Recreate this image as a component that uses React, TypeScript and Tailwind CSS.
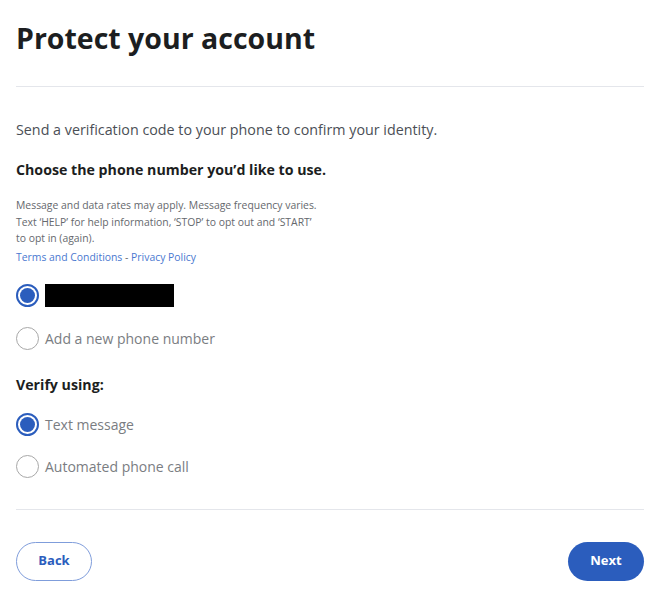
import React, { useState } from 'react';

const font = { fontFamily: '"Open Sans", Lato, sans-serif' };

function Radio({ checked, label, onClick, children }: { checked: boolean; label?: string; onClick: () => void; children?: React.ReactNode }) {
  return (
    <button type="button" onClick={onClick} className="flex items-center gap-[6px] text-left">
      {checked ? (
        <span className="flex h-[23px] w-[23px] shrink-0 items-center justify-center rounded-full border-[2px] border-[#2b5dbd] bg-white">
          <span className="h-[15px] w-[15px] rounded-full bg-[#2b5dbd]" />
        </span>
      ) : (
        <span className="h-[23px] w-[23px] shrink-0 rounded-full border-[1.5px] border-[#a8a8a8] bg-white" />
      )}
      {children ?? <span className="text-[14px] text-[#7a7d82]">{label}</span>}
    </button>
  );
}

export default function App() {
  const [phone, setPhone] = useState(0);
  const [method, setMethod] = useState(0);

  return (
    <div className="min-h-[599px] w-[662px] bg-white pl-4 pr-[18px]" style={font}>
      <h1 className="pt-[20px] text-[28.5px] font-bold leading-[36px] text-[#1c1e21]">Protect your account</h1>
      <div className="mt-[30px] h-px bg-[#e4e6eb]" />

      <p className="mt-[33px] text-[14.3px] leading-[20px] text-[#4b4f56]">
        Send a verification code to your phone to confirm your identity.
      </p>
      <p className="mt-[20px] text-[14.2px] font-bold leading-[20px] text-[#1c1e21]">
        Choose the phone number you’d like to use.
      </p>
      <p className="mt-[17px] text-[10.4px] leading-[16.5px] text-[#65686d]">
        Message and data rates may apply. Message frequency varies.
        <br />
        Text ‘HELP’ for help information, ‘STOP’ to opt out and ‘START’
        <br />
        to opt in (again).
      </p>
      <p className="mt-[3px] text-[10.4px] leading-[14px] text-[#65686d]">
        <a className="text-[#4a78d0]">Terms and Conditions</a> - <a className="text-[#4a78d0]">Privacy Policy</a>
      </p>

      <div className="mt-[20px] flex flex-col gap-[20px]">
        <Radio checked={phone === 0} onClick={() => setPhone(0)}>
          <span className="h-[23px] w-[129px] bg-black" />
        </Radio>
        <Radio checked={phone === 1} onClick={() => setPhone(1)} label="Add a new phone number" />
      </div>

      <p className="mt-[25px] text-[14.2px] font-bold leading-[20px] text-[#1c1e21]">Verify using:</p>
      <div className="mt-[18px] flex flex-col gap-[19px]">
        <Radio checked={method === 0} onClick={() => setMethod(0)} label="Text message" />
        <Radio checked={method === 1} onClick={() => setMethod(1)} label="Automated phone call" />
      </div>

      <div className="mt-[31px] h-px bg-[#e4e6eb]" />

      <div className="mt-[32px] flex items-center justify-between">
        <button type="button" className="h-[39px] w-[76px] rounded-full border border-[#7f9ddb] bg-white text-[13px] font-bold text-[#2b5dbd]">
          Back
        </button>
        <button type="button" className="h-[39px] w-[76px] rounded-full bg-[#2b5dbd] text-[13px] font-bold text-white">
          Next
        </button>
      </div>
    </div>
  );
}
